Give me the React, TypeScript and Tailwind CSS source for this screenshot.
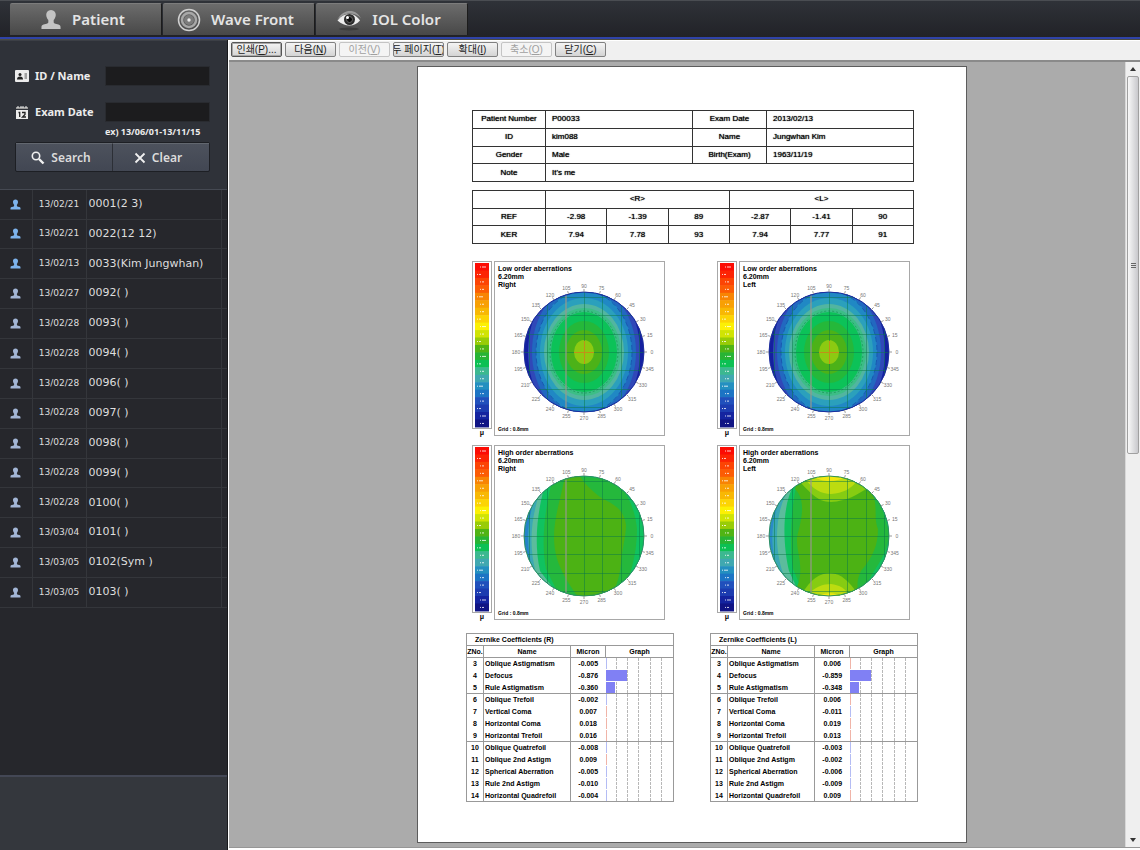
import React, { useState } from 'react';

// --- Type Definitions ---
type Patient = { id: string; date: string; label: string; recent?: boolean };
type Eye = 'Right' | 'Left';
type Order = 'Low' | 'High';
type Coefficient = { no: number; name: string; right: string; left: string; bars?: [number, number] };

// --- Data ---
const patients: Patient[] = [
    { id: '0001', date: '13/02/21', label: '0001(2 3)', recent: true },
    { id: '0022', date: '13/02/21', label: '0022(12 12)', recent: true },
    { id: '0033', date: '13/02/13', label: '0033(Kim Jungwhan)', recent: true },
    { id: '0092', date: '13/02/27', label: '0092( )' },
    { id: '0093', date: '13/02/28', label: '0093( )' },
    { id: '0094', date: '13/02/28', label: '0094( )' },
    { id: '0096', date: '13/02/28', label: '0096( )' },
    { id: '0097', date: '13/02/28', label: '0097( )' },
    { id: '0098', date: '13/02/28', label: '0098( )' },
    { id: '0099', date: '13/02/28', label: '0099( )' },
    { id: '0100', date: '13/02/28', label: '0100( )' },
    { id: '0101', date: '13/03/04', label: '0101( )' },
    { id: '0102', date: '13/03/05', label: '0102(Sym )' },
    { id: '0103', date: '13/03/05', label: '0103( )' },
];

const printActions = [
    { text: '인쇄', hotkey: 'P', tail: '...', focused: true },
    { text: '다음', hotkey: 'N' },
    { text: '이전', hotkey: 'V', disabled: true },
    { text: '두 페이지', hotkey: 'T' },
    { text: '확대', hotkey: 'I' },
    { text: '축소', hotkey: 'O', disabled: true },
    { text: '닫기', hotkey: 'C' },
];

const coefficientGroups: Coefficient[][] = [
    [
        { no: 3, name: 'Oblique Astigmatism', right: '-0.005', left: '0.006' },
        { no: 4, name: 'Defocus', right: '-0.876', left: '-0.859', bars: [21, 21] },
        { no: 5, name: 'Rule Astigmatism', right: '-0.360', left: '-0.348', bars: [9, 9] },
    ],
    [
        { no: 6, name: 'Oblique Trefoil', right: '-0.002', left: '0.006' },
        { no: 7, name: 'Vertical Coma', right: '0.007', left: '-0.011' },
        { no: 8, name: 'Horizontal Coma', right: '0.018', left: '0.019' },
        { no: 9, name: 'Horizontal Trefoil', right: '0.016', left: '0.013' },
    ],
    [
        { no: 10, name: 'Oblique Quatrefoil', right: '-0.008', left: '-0.003' },
        { no: 11, name: 'Oblique 2nd Astigm', right: '0.009', left: '-0.002' },
        { no: 12, name: 'Spherical Aberration', right: '-0.005', left: '-0.006' },
        { no: 13, name: 'Rule 2nd Astigm', right: '-0.010', left: '-0.009' },
        { no: 14, name: 'Horizontal Quadrefoil', right: '-0.004', left: '0.009' },
    ],
];

// --- Icons ---
const PersonIcon = ({ className }: { className?: string }) => (
    <svg viewBox="0 0 22 22" className={className} fill="currentColor" aria-hidden="true">
        <path d="M11 1c3.300 0 5 2.300 5 5 0 2-.9 4.200-2.200 5.400v2.200c0 1 .6 1.500 1.800 1.800l3.200.8c1.600.4 2.200 1.400 2.200 2.800v2H1v-2c0-1.400.6-2.400 2.200-2.800l3.200-.8c1.200-.3 1.800-.8 1.800-1.800v-2.200C6.900 10.200 6 8 6 6c0-2.700 1.700-5 5-5z" />
    </svg>
);

const TargetIcon = () => (
    <svg viewBox="0 0 24 24" className="size-6" fill="none" aria-hidden="true">
        <circle cx="12" cy="12" r="10.500" stroke="#d0d0d0" strokeWidth="1.500" />
        <circle cx="12" cy="12" r="7" stroke="#a8a8a8" strokeWidth="2.500" />
        <circle cx="12" cy="12" r="5" fill="#7c7c7c" />
        <circle cx="12" cy="12" r="1.700" fill="#e8e8e8" />
    </svg>
);

const EyeIcon = () => (
    <svg viewBox="0 0 26 22" className="h-[22px] w-[26px]" aria-hidden="true">
        <ellipse cx="13" cy="20" rx="10" ry="1.500" fill="#3c3c3c" />
        <path d="M1 11C5 4.500 9 2 14 2s8.500 2.500 11 7.500C22 6 18.500 4.500 14 4.500 9 4.500 5 7 1 11z" fill="#9a9a9a" />
        <path d="M1.500 11.500C5 7 9 5 13.500 5S21 7.500 24 11.500c-3 3.500-6.500 5-10.500 5s-8.500-1.800-12-5z" fill="#ececec" />
        <circle cx="13.500" cy="10.500" r="5.500" fill="#2c2c2c" />
        <circle cx="13.500" cy="10.500" r="3" fill="#0c0c0c" stroke="#666" />
        <circle cx="11.500" cy="8.500" r="1.500" fill="#fff" />
    </svg>
);

const IdCardIcon = () => (
    <svg viewBox="0 0 14 12" className="h-3 w-3.5" aria-hidden="true">
        <rect width="14" height="12" rx="1" fill="#ececec" />
        <circle cx="5" cy="4.500" r="1.500" fill="#222" />
        <path d="M2 9.500c0-2 1-3 3-3s3 1 3 3z" fill="#222" />
        <path d="M9.500 4H12M9.500 6H12M9.500 8H12" stroke="#555" />
    </svg>
);

const CalendarIcon = () => (
    <svg viewBox="0 0 14 13" className="h-[13px] w-3.5" aria-hidden="true">
        <path d="M1 1h12v2H1z" fill="#999" />
        <path d="M3 0v2M6 0v2M8 0v2M11 0v2" stroke="#eee" />
        <path d="M1 4h12v9H1z" fill="#ececec" />
        <path d="M3.500 6.500h1.200V11M7 6.500h3v2L7.500 11H11" stroke="#222" strokeWidth="1.300" fill="none" />
    </svg>
);

const SearchIcon = () => (
    <svg viewBox="0 0 14 14" className="size-3.5" fill="none" stroke="#f0f0f0" aria-hidden="true">
        <circle cx="5" cy="5" r="3.700" strokeWidth="1.600" />
        <path d="M8 8l4.500 4.500" strokeWidth="2.400" />
    </svg>
);

const ClearIcon = () => (
    <svg viewBox="0 0 12 12" className="size-3" fill="none" stroke="#f0f0f0" strokeWidth="1.800" aria-hidden="true">
        <path d="M1.500 1.500l9 9M10.500 1.500l-9 9" />
    </svg>
);

// --- Header ---
const tabs = [
    { name: 'Patient', icon: <PersonIcon className="h-[21px] w-[22px] text-[#c4c4c4]" /> },
    { name: 'Wave Front', icon: <TargetIcon /> },
    { name: 'IOL Color', icon: <EyeIcon /> },
];

const Header = () => {
    const [active, setActive] = useState('Patient');

    return (
        <header className="h-10 shrink-0 border-t border-[#4a4d52] bg-linear-to-b from-[#2f3238] to-[#202126] pt-0.5">
            <nav className="flex h-8 gap-px px-2.5">
                {tabs.map(tab => (
                    <button
                        key={tab.name}
                        onClick={() => setActive(tab.name)}
                        aria-pressed={active === tab.name}
                        className="flex w-38 items-center justify-center gap-2.5 rounded-t-xs border-t border-r border-[#7c7c7c] border-r-[#1c1c1c] bg-linear-to-b from-[#6c6c6c] to-[#484848] pr-1.5 font-['Noto_Sans',sans-serif] text-[15px] font-semibold text-[#e4e4e4]"
                    >
                        {tab.icon}
                        {tab.name}
                    </button>
                ))}
            </nav>
            <div className="mt-0.5 h-[3px] border-b border-[#4c4c44] bg-[#2f43a8]" />
        </header>
    );
};

// --- Sidebar ---
const inputStyle = 'h-5 w-[105px] border border-[#292b30] bg-[#1c1c1e] px-1 text-xs text-white outline-none';
const labelStyle = 'flex flex-1 items-center gap-1.5 text-[11px] font-bold text-[#ececec]';

const SearchForm = () => (
    <form
        onSubmit={e => e.preventDefault()}
        className="flex h-[149px] flex-col border-t border-[#3c3f46] bg-[#2f3239] pt-[25px] pr-[17px] pl-[15px] font-['Noto_Sans',sans-serif]"
    >
        <div className="flex items-center">
            <label htmlFor="patient-id" className={labelStyle}><IdCardIcon />ID / Name</label>
            <input id="patient-id" type="text" className={inputStyle} />
        </div>
        <div className="mt-4 flex items-center">
            <label htmlFor="exam-date" className={labelStyle}><CalendarIcon />Exam Date</label>
            <input id="exam-date" type="text" className={inputStyle} />
        </div>
        <p className="mt-1 ml-[90px] text-[9px] leading-3 font-bold text-[#ececec]">ex) 13/06/01-13/11/15</p>
        <div className="mt-1 flex h-[30px] rounded-xs border border-[#1d1f24] bg-linear-to-b from-[#4d525d] to-[#424753] text-[12px] font-semibold text-[#dcdcdc]">
            <button type="submit" className="flex flex-1 items-center justify-center gap-1.5 border-t border-r border-[#62676f] border-r-[#2c2f36] pr-1.5"><SearchIcon />Search</button>
            <button type="reset" className="flex flex-1 items-center justify-center gap-1.5 border-t border-[#62676f] pr-1.5"><ClearIcon />Clear</button>
        </div>
    </form>
);

const Sidebar = () => (
    <aside className="flex w-[228px] shrink-0 flex-col border-r border-[#17181b] bg-[#26272c]">
        <SearchForm />
        <div className="flex-1 border-t border-[#454952]">
            <table className="h-[418px] w-full table-fixed border-collapse font-['DejaVu_Sans',sans-serif] text-[#dedede]">
                <colgroup>
                    <col className="w-8" />
                    <col className="w-[54px]" />
                    <col />
                    <col className="w-1.5" />
                </colgroup>
                <tbody>
                    {patients.map(p => (
                        <tr key={p.id} className="border-b border-[#34363b]">
                            <td className="border-r border-[#34363b]">
                                <PersonIcon className={`mx-auto size-[11px] ${p.recent ? 'text-[#7db3ec]' : 'text-[#a3b6d6]'}`} />
                            </td>
                            <td className="border-r border-[#34363b] text-center text-[9px]">{p.date}</td>
                            <td className="border-r border-[#34363b] pl-0.5 text-[11px] whitespace-nowrap">{p.label}</td>
                            <td />
                        </tr>
                    ))}
                </tbody>
            </table>
        </div>
        <div className="h-[75px] shrink-0 border-t-2 border-[#434755] bg-[#34373d]" />
    </aside>
);

// --- Aberration maps ---
const angles = Array.from({ length: 24 }, (_, i) => i * 15);
const columnOffsets = [-55, -37, 0, 18, 37, 55];
const rowOffsets = [-55, -37, -18, 0, 18, 37, 55];

// rings of the low order map, from the rim to the centre
const lowRings = [
    { rx: 56, ry: 76, fill: '#3048b8' },
    { rx: 52, ry: 68, fill: '#2268c0' },
    { rx: 48, ry: 62, fill: '#2088c4' },
    { rx: 44, ry: 54, fill: '#2ba0bc' },
    { rx: 40, ry: 48, fill: '#52b5a0' },
    { rx: 37, ry: 44, fill: '#3cbe86' },
    { rx: 33, ry: 40, fill: '#0cc258' },
    { rx: 25, ry: 31, fill: '#25b83a' },
    { rx: 18, ry: 22, fill: '#4cb218' },
    { rx: 10, ry: 12, fill: '#8cca12' },
];

const LowOrderSurface = () => (
    <>
        <rect x="29" y="30" width="122" height="122" fill="#1420a0" />
        {lowRings.map(ring => (
            <ellipse key={ring.rx} cx="90" cy="91" rx={ring.rx} ry={ring.ry} fill={ring.fill} />
        ))}
        <ellipse cx="90" cy="91" rx="48" ry="61" fill="none" stroke="#1a58b0" strokeDasharray="5 3" />
        <ellipse cx="90" cy="91" rx="34" ry="41" fill="none" stroke="#22a060" strokeDasharray="2 2" />
    </>
);

const HighRightSurface = () => (
    <>
        <rect x="29" y="30" width="122" height="122" fill="#2484c8" />
        <path d="M50 30C36 60 28 90 40 130L54 152H151V30z" fill="#3aa8b4" />
        <path d="M52 30C40 60 32 92 42 128L58 152H151V30z" fill="#5cbc9c" />
        <path d="M54 30C44 60 39 95 46 126L66 152H151V30z" fill="#10c260" />
        <path d="M60 30C50 62 47 100 52 124L66 152H126C136 134 143 110 143 84 141 64 134 48 120 34z" fill="#25b83c" />
        <path d="M71 32C66 55 60 74 60 92 60 116 70 132 84 152H116C124 140 126 128 127 118 128 104 132 92 132 80 130 62 116 58 106 52 98 46 90 38 85 30z" fill="#4cb214" />
        <path d="M148 72c4 12 4 24 0 38h4V72z" fill="#5cbc9c" />
    </>
);

const HighLeftSurface = () => (
    <>
        <rect x="29" y="30" width="122" height="122" fill="#2a8ac8" />
        <path d="M52 38C32 60 28 100 40 128L54 152H151V30H60z" fill="#3aa8b4" />
        <path d="M54 38C36 60 34 100 44 128L60 152H151V30H60z" fill="#5cbc9c" />
        <path d="M56 38C42 60 44 100 50 126L62 152H151V30H60z" fill="#10c260" />
        <path d="M58 38C52 62 50 100 54 124L66 152H124C126 130 150 116 150 86 144 70 142 54 134 40L120 30z" fill="#25b83c" />
        <path d="M56 44C68 56 62 76 58 92 57 108 66 122 58 142L70 152H118C120 144 116 138 122 126 134 112 139 100 139 84 134 72 140 60 132 46L120 30H60z" fill="#4cb214" />
        <path d="M60 36C70 46 78 57 92 57 108 56 118 50 130 42L110 26H70z" fill="#86cc12" />
        <path d="M66 34C74 44 82 49 92 49 104 48 112 44 118 36L104 26H76z" fill="#bcdc10" />
        <path d="M76 32C82 37 98 38 108 31V26H76z" fill="#f0e810" />
        <path d="M62 150C72 134 80 128 92 128 102 129 110 136 118 148L100 156H76z" fill="#86cc12" />
        <path d="M68 150C76 142 84 139 92 139 100 140 106 143 110 150L100 156H76z" fill="#bcdc10" />
        <path d="M78 152C84 147 98 147 102 152V156H78z" fill="#f0e810" />
    </>
);

const AberrationMap = ({ order, eye }: { order: Order; eye: Eye }) => {
    const clipId = `pupil-${order}-${eye}`;

    return (
        <svg viewBox="0 0 171 175" className="h-[175px] w-[171px]" fontFamily="'Liberation Sans', Arial, sans-serif" role="img" aria-label={`${order} order aberrations, ${eye}`}>
            <rect x="0.500" y="0.500" width="170" height="174" fill="#fff" stroke="#a8a8a8" />
            <clipPath id={clipId}><circle cx="90" cy="91" r="60" /></clipPath>
            <g clipPath={`url(#${clipId})`}>
                {order === 'Low' && <LowOrderSurface />}
                {order === 'High' && eye === 'Right' && <HighRightSurface />}
                {order === 'High' && eye === 'Left' && <HighLeftSurface />}
                <g stroke="#0a7848" strokeOpacity="0.500">
                    {columnOffsets.map(o => <path key={o} d={`M${90 + o + 0.5} 30v122`} />)}
                    {rowOffsets.map(o => <path key={o} d={`M30 ${91 + o + 0.5}h122`} />)}
                </g>
                <path d="M72 30v122" stroke="#98988c" strokeWidth="1.200" />
                {order === 'Low' && <path d="M90.500 80v23M80 91.500h20" stroke="#c09018" />}
            </g>
            <circle cx="90" cy="91" r="60" fill="none" stroke={order === 'Low' ? '#1c2c9c' : '#2c9060'} />
            {angles.map(a => {
                const rad = (a * Math.PI) / 180;
                const x = Math.cos(rad);
                const y = -Math.sin(rad);
                return (
                    <g key={a}>
                        <path d={`M${90 + x * 60} ${91 + y * 60}L${90 + x * 63} ${91 + y * 63}`} stroke="#999" />
                        <text x={90 + x * 68} y={93 + y * 66} textAnchor="middle" fontSize="5" fill="#777">{a}</text>
                    </g>
                );
            })}
            <g fontSize="7" fontWeight="bold">
                <text x="4" y="10">{order} order aberrations</text>
                <text x="4" y="18">6.20mm</text>
                <text x="4" y="26">{eye}</text>
            </g>
            <text x="4" y="170" fontSize="5" fontWeight="bold">Grid : 0.8mm</text>
        </svg>
    );
};

const scaleColors = [
    '#fc0c04', '#fc2404', '#fc4404', '#fc5c04', '#f88404', '#f8a004', '#f8b804', '#fcd404', '#fcf004', '#d0e404',
    '#98cc08', '#50b414', '#28b434', '#0cc054', '#3cb890', '#40a8b0', '#2490c0', '#1c74c4', '#2050bc', '#1c3cb0', '#1424a0', '#101484',
];

const ColorScale = () => (
    <div className="w-5">
        <svg viewBox="0 0 20 168" className="h-[168px] w-5" aria-hidden="true">
            <rect x="0.500" y="0.500" width="19" height="167" fill="#fff" stroke="#a8a8a8" />
            {scaleColors.map((c, i) => (
                <rect key={c} x="3" y={2 + i * 7.45} width="14" height="8" fill={c} />
            ))}
            {scaleColors.map((c, i) => (
                <path key={c} d={`M${i % 3 === 1 ? 5 : 8} ${6 + i * 7.45}h1m1 0h${i % 4 === 0 ? 4 : 2}`} stroke="#fff" strokeOpacity="0.800" />
            ))}
        </svg>
        <p className="text-center text-[7px] leading-[7px] font-bold">μ</p>
    </div>
);

// --- Report tables ---
const cell = 'border border-[#333] p-0';
const tableStyle = 'w-full table-fixed border-collapse text-[8px] leading-none [text-shadow:0_0_1px_#000]';

const PatientTable = () => (
    <table className={`${tableStyle} h-[72px] text-left`}>
        <colgroup>
            <col className="w-[73px]" />
            <col />
            <col className="w-[74px]" />
            <col />
        </colgroup>
        <tbody>
            {[
                ['Patient Number', 'P00033', 'Exam Date', '2013/02/13'],
                ['ID', 'kim088', 'Name', 'Jungwhan Kim'],
                ['Gender', 'Male', 'Birth(Exam)', '1963/11/19'],
            ].map(([a, b, c, d]) => (
                <tr key={a}>
                    <th className={`${cell} text-center font-normal`}>{a}</th>
                    <td className={`${cell} pl-1.5`}>{b}</td>
                    <th className={`${cell} text-center font-normal`}>{c}</th>
                    <td className={`${cell} pl-1.5`}>{d}</td>
                </tr>
            ))}
            <tr>
                <th className={`${cell} text-center font-normal`}>Note</th>
                <td colSpan={3} className={`${cell} pl-1.5`}>It's me</td>
            </tr>
        </tbody>
    </table>
);

const RefractionTable = () => (
    <table className={`${tableStyle} mt-2 h-[54px] text-center`}>
        <tbody>
            <tr>
                <th className={`${cell} w-[73px]`} />
                <th colSpan={3} className={`${cell} font-normal`}>&lt;R&gt;</th>
                <th colSpan={3} className={`${cell} font-normal`}>&lt;L&gt;</th>
            </tr>
            {[
                ['REF', '-2.98', '-1.39', '89', '-2.87', '-1.41', '90'],
                ['KER', '7.94', '7.78', '93', '7.94', '7.77', '91'],
            ].map(([name, ...values]) => (
                <tr key={name}>
                    <th className={`${cell} font-normal`}>{name}</th>
                    {values.map((v, i) => <td key={i} className={cell}>{v}</td>)}
                </tr>
            ))}
        </tbody>
    </table>
);

const ZernikeTable = ({ eye }: { eye: Eye }) => {
    const side = eye === 'Right' ? 0 : 1;

    return (
        <table className="w-52 table-fixed border-collapse border border-[#999] text-[7px] leading-none">
            <colgroup>
                <col className="w-[17px]" />
                <col className="w-[87px]" />
                <col className="w-[35px]" />
                <col />
            </colgroup>
            <thead>
                <tr className="h-3 border-b border-[#999]">
                    <th colSpan={4} className="p-0 pl-2 text-left">Zernike Coefficients ({eye[0]})</th>
                </tr>
                <tr className="h-3 border-b border-[#999]">
                    {['ZNo.', 'Name', 'Micron', 'Graph'].map(h => (
                        <th key={h} className="border-r border-[#999] p-0">{h}</th>
                    ))}
                </tr>
            </thead>
            {coefficientGroups.map((group, g) => (
                <tbody key={g} className="border-b border-[#999] font-bold">
                    {group.map(row => {
                        const value = side === 0 ? row.right : row.left;
                        return (
                            <tr key={row.no} className="h-3">
                                <td className="border-r border-[#999] p-0 text-center">{row.no}</td>
                                <td className="border-r border-[#999] p-0 pl-px whitespace-nowrap">{row.name}</td>
                                <td className="p-0 text-center">{value}</td>
                                <td className="p-0">
                                    <div className="relative grid h-[11px] grid-cols-6">
                                        {[1, 2, 3, 4, 5].map(n => <span key={n} className="border-r border-dashed border-[#b8b8b8]" />)}
                                        <span
                                            className={`absolute inset-y-0 left-0 ${row.bars ? 'bg-[#8080f4]' : value.startsWith('-') ? 'bg-[#b4bcf4]' : 'bg-[#f0b4a8]'}`}
                                            style={{ width: row.bars ? row.bars[side] : 1 }}
                                        />
                                    </div>
                                </td>
                            </tr>
                        );
                    })}
                </tbody>
            ))}
        </table>
    );
};

const eyes: Eye[] = ['Right', 'Left'];
const orders: Order[] = ['Low', 'High'];

const ReportPage = () => (
    <article className="w-[550px] shrink-0 self-start border border-[#5c5c5c] bg-white pt-[43px] pb-10 font-['Liberation_Sans',Arial,sans-serif] text-black">
        <div className="ml-[54px] w-[442px]">
            <PatientTable />
            <RefractionTable />
            <div className="mt-[17px] grid grid-cols-[193px_193px] gap-x-[52px] gap-y-[9px]">
                {orders.map(order => eyes.map(eye => (
                    <div key={order + eye} className="flex gap-0.5">
                        <ColorScale />
                        <AberrationMap order={order} eye={eye} />
                    </div>
                )))}
            </div>
        </div>
        <div className="mt-[13px] ml-12 flex gap-9">
            {eyes.map(eye => <ZernikeTable key={eye} eye={eye} />)}
        </div>
    </article>
);

// --- Print preview ---
const PrintToolbar = () => (
    <div className="flex h-5 shrink-0 items-start gap-[3px] border-t border-white bg-[#f0f0f0] px-0.5 pt-px">
        {printActions.map(a => (
            <button
                key={a.hotkey}
                disabled={a.disabled}
                className={`flex h-[15px] w-[51px] items-center justify-center overflow-hidden rounded-xs border bg-linear-to-b from-[#f4f4f4] to-[#d4d4d4] font-['Liberation_Sans','Noto_Sans_CJK_KR',sans-serif] text-[10px] leading-none whitespace-nowrap text-[#222] disabled:border-[#c4c4c4] disabled:from-[#f4f4f4] disabled:to-[#f4f4f4] disabled:text-[#a0a0a0] ${a.focused ? 'border-[#555] inset-ring inset-ring-[#a8a8a8]' : 'border-[#808080]'}`}
            >
                <span>{a.text}(<u>{a.hotkey}</u>){a.tail}</span>
            </button>
        ))}
    </div>
);

const ScrollTrack = () => (
    <div className="flex w-[15px] shrink-0 flex-col items-center border-l border-[#d8d8d8] bg-[#efefef]">
        <button aria-label="Scroll up" className="flex h-3.5 w-full shrink-0 items-center justify-center">
            <svg viewBox="0 0 6 4" className="h-1 w-1.5"><path d="M0 4l3-4 3 4z" fill="#333" /></svg>
        </button>
        <div className="flex h-[378px] w-3 flex-col items-center justify-center gap-px rounded-xs border border-[#a0a0a0] bg-linear-to-r from-[#f8f8f8] to-[#c8c8cc]">
            {[1, 2, 3].map(n => <span key={n} className="h-px w-[5px] bg-[#666]" />)}
        </div>
        <button aria-label="Scroll down" className="mt-auto flex h-3.5 w-full shrink-0 items-center justify-center">
            <svg viewBox="0 0 6 4" className="h-1 w-1.5"><path d="M0 0l3 4 3-4z" fill="#333" /></svg>
        </button>
    </div>
);

const App: React.FC = () => (
    <div className="flex min-h-screen flex-col bg-[#26272c]">
        <Header />
        <div className="flex flex-1">
            <Sidebar />
            <main className="flex min-w-0 flex-1 flex-col border-b-2 border-l border-white">
                <PrintToolbar />
                <div className="flex flex-1 border-t-2 border-b border-[#8a8a8a] border-b-[#969696] bg-[#ababab]">
                    <div className="flex flex-1 justify-center pt-1 pb-1 pl-[30px]">
                        <ReportPage />
                    </div>
                    <ScrollTrack />
                </div>
            </main>
        </div>
    </div>
);

export default App;
